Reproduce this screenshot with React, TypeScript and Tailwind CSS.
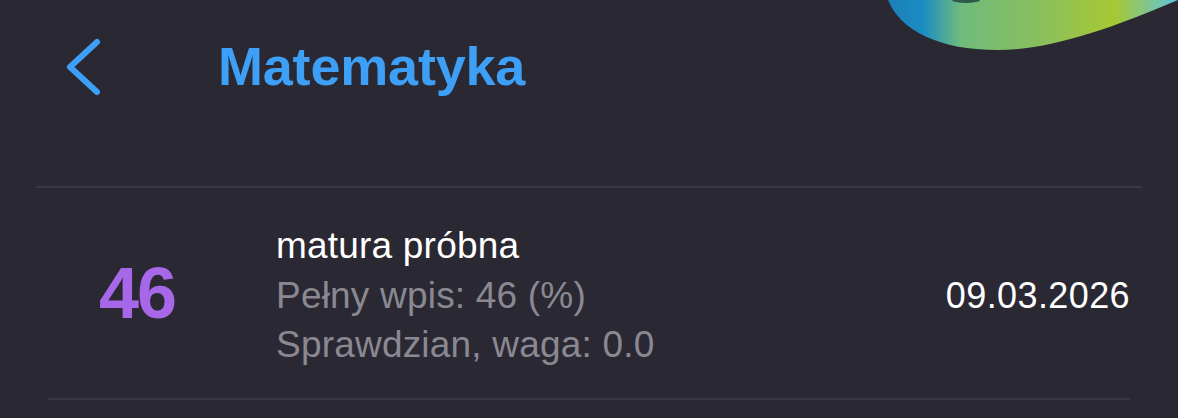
interface Grade {
  value: string;
  title: string;
  entry: string;
  category: string;
  date: string;
}

const grades: Grade[] = [
  {
    value: "46",
    title: "matura próbna",
    entry: "Pełny wpis: 46 (%)",
    category: "Sprawdzian, waga: 0.0",
    date: "09.03.2026",
  },
];

function Blob() {
  return (
    <svg
      className="absolute top-0 right-0"
      width="300"
      height="60"
      viewBox="0 0 300 60"
    >
      <defs>
        <linearGradient id="blobGrad" x1="0" y1="0" x2="1" y2="0">
          <stop offset="0%" stopColor="#1d7fb8" />
          <stop offset="12%" stopColor="#1a8dc3" />
          <stop offset="25%" stopColor="#6fbb7c" />
          <stop offset="55%" stopColor="#8cc05a" />
          <stop offset="78%" stopColor="#a6c832" />
          <stop offset="100%" stopColor="#5ec3e0" />
        </linearGradient>
      </defs>
      <path
        d="M10 0 C 22 30, 60 50, 120 50 C 170 50, 230 30, 300 0 Z"
        fill="url(#blobGrad)"
      />
      <ellipse cx="88" cy="0" rx="14" ry="3" fill="#2f5a4a" />
    </svg>
  );
}

function BackChevron() {
  return (
    <svg width="40" height="60" viewBox="0 0 40 60" className="shrink-0">
      <polyline
        points="31,5 4,30 31,55"
        fill="none"
        stroke="#3d9ff5"
        strokeWidth="6"
        strokeLinecap="round"
        strokeLinejoin="round"
      />
    </svg>
  );
}

export default function App() {
  return (
    <div
      className="relative w-[1178px] h-[418px] overflow-hidden bg-[#2a2833]"
      style={{ fontFamily: '"Liberation Sans", Arial, sans-serif' }}
    >
      <Blob />

      {/* Header */}
      <div className="flex items-center h-[134px] pl-[66px]">
        <BackChevron />
        <h1 className="ml-[112px] text-[54px] font-bold text-[#3d9ff5] tracking-[-0.2px] -mt-[2px]">
          Matematyka
        </h1>
      </div>

      {/* List */}
      <div className="mt-[52px] mx-[36px] border-t-[2px] border-[#3a3843]">
        {grades.map((g, idx) => (
          <div
            key={idx}
            className="flex items-center h-[212px] border-b-[2px] border-[#3a3843] mx-[12px]"
          >
            <div className="w-[180px] flex justify-center -ml-[12px]">
              <span className="text-[72px] font-bold text-[#a767e9] tracking-[-2px] leading-none ml-[22px]">
                {g.value}
              </span>
            </div>
            <div className="flex flex-col ml-[60px] pt-[4px]">
              <span className="text-[37px] leading-[50px] text-white tracking-[0.2px]">
                {g.title}
              </span>
              <span className="text-[37px] leading-[50px] text-[#8a8891] tracking-[0.2px]">
                {g.entry}
              </span>
              <span className="text-[37px] leading-[48px] text-[#8a8891] tracking-[0.2px]">
                {g.category}
              </span>
            </div>
            <span className="ml-auto text-[36px] text-white tracking-[0.4px] mr-[0px] mt-[6px]">
              {g.date}
            </span>
          </div>
        ))}
      </div>
    </div>
  );
}
